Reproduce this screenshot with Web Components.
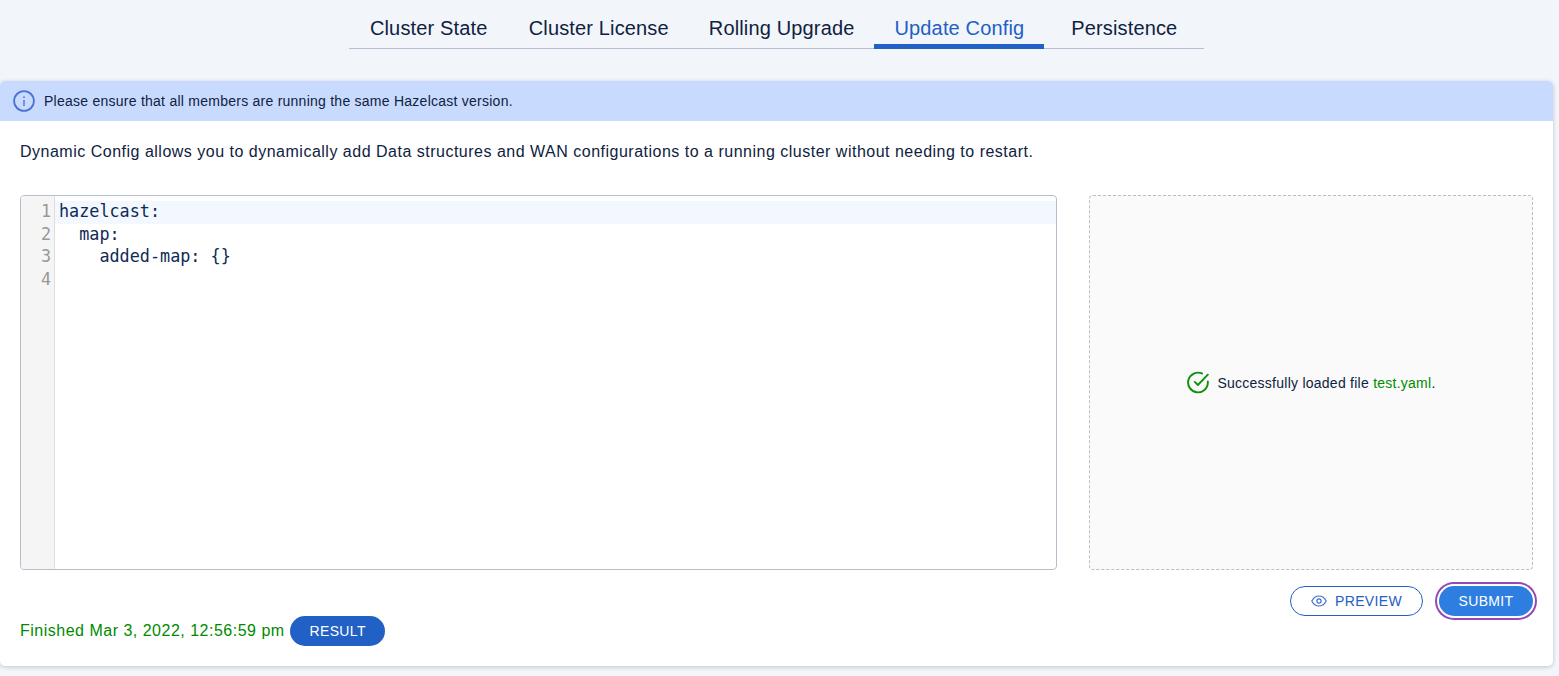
<!DOCTYPE html>
<html>
<head>
<meta charset="utf-8">
<title>Update Config</title>
<style>
  html, body { margin: 0; padding: 0; height: 676px; overflow: hidden; background: #f2f5fa; }
  body { font-family: "Liberation Sans", Arial, sans-serif; color: #0f2240; }
</style>
</head>
<body>
<config-page></config-page>
<script>
class TabBar extends HTMLElement {
  constructor() {
    super();
    this.attachShadow({ mode: 'open' });
    const active = this.getAttribute('active');
    const tabs = this.getAttribute('tabs').split('|');
    this.shadowRoot.innerHTML = `
      <style>
        :host { display: flex; justify-content: center; padding-top: 8px; padding-right: 6px; }
        .tabs { display: flex; border-bottom: 1px solid #b3bfd3; height: 40px; }
        .tab { font-size: 20px; letter-spacing: 0.15px; line-height: 40px; min-width: 160px; text-align: center; padding: 0 20px; color: #0f2240; box-sizing: border-box; height: 41px; }
        .tab.active { color: #2160c4; border-bottom: 5px solid #2160c4; }
      </style>
      <div class="tabs">
        ${tabs.map(t => `<div class="tab${t === active ? ' active' : ''}">${t}</div>`).join('')}
      </div>
    `;
  }
}

class InfoBanner extends HTMLElement {
  constructor() {
    super();
    this.attachShadow({ mode: 'open' });
    this.shadowRoot.innerHTML = `
      <style>
        :host { display: flex; align-items: center; gap: 9px; height: 40px; padding-left: 13px; background: #c9daff; border-radius: 5px 5px 0 0; font-size: 14px; letter-spacing: 0.25px; color: #0f2240; }
        svg { width: 22px; height: 22px; flex-shrink: 0; }
      </style>
      <svg viewBox="0 0 22 22" fill="none" stroke="#4a74cf" stroke-width="1.8" stroke-linecap="round">
        <circle cx="11" cy="11" r="9.9"></circle>
        <path d="M11 10.5v5" stroke-width="1.4"></path>
        <path d="M11 7v.2" stroke-width="1.7"></path>
      </svg>
      <slot></slot>
    `;
  }
}

class CodeEditor extends HTMLElement {
  constructor() {
    super();
    this.attachShadow({ mode: 'open' });
    const lines = ['hazelcast:', '  map:', '    added-map: {}', ''];
    this.shadowRoot.innerHTML = `
      <style>
        :host { display: flex; flex: 1; min-width: 0; height: 375px; box-sizing: border-box; border: 1px solid #b5bfcc; border-radius: 4px; overflow: hidden; background: #fff; font-family: "DejaVu Sans Mono", monospace; font-size: 16.8px; line-height: 22.4px; }
        .gutter { width: 33px; background: #f5f5f5; border-right: 1px solid #ddd; padding-top: 4.3px; color: #999; text-align: right; box-sizing: content-box; }
        .gutter div { padding-right: 3px; }
        .code { flex: 1; padding-top: 5.3px; color: #0f2a55; white-space: pre; }
        .line { padding-left: 4px; height: 22.4px; line-height: 20.4px; }
        .line.current { background: #f3f8fe; }
      </style>
      <div class="gutter">${lines.map((_, i) => `<div>${i + 1}</div>`).join('')}</div>
      <div class="code">${lines.map((l, i) => `<div class="line${i === 0 ? ' current' : ''}">${l}</div>`).join('')}</div>
    `;
  }
}

class DropZone extends HTMLElement {
  constructor() {
    super();
    this.attachShadow({ mode: 'open' });
    this.shadowRoot.innerHTML = `
      <style>
        :host { display: flex; align-items: center; justify-content: center; gap: 8px; width: 444px; height: 375px; box-sizing: border-box; border: 1px dashed #bcbcc4; border-radius: 4px; background: #fafafa; font-size: 14px; letter-spacing: 0.25px; color: #0f2240; }
        svg { width: 23px; height: 23px; flex-shrink: 0; }
        ::slotted(em) { font-style: normal; color: #008a00; }
      </style>
      <svg viewBox="0 0 24 24" fill="none" stroke="#0e920e" stroke-width="2" stroke-linecap="round" stroke-linejoin="round">
        <path d="M22.8 11v1a10.3 10.3 0 1 1-6.1-9.4"></path>
        <path d="M22.8 3.8 12.4 14.6l-3.2-3.2"></path>
      </svg>
      <span><slot></slot></span>
    `;
  }
}

class PillButton extends HTMLElement {
  constructor() {
    super();
    this.attachShadow({ mode: 'open' });
    this.shadowRoot.innerHTML = `
      <style>
        :host { display: inline-flex; align-items: center; justify-content: center; gap: 8px; height: 30px; box-sizing: border-box; border-radius: 15px; font-size: 14px; letter-spacing: 0.35px; background: #2160c4; color: #fff; width: 95px; }
        :host([variant="outline"]) { background: #fff; color: #2160c4; border: 1px solid #2160c4; width: 133px; }
        :host([variant="focus"]) { background: #2e7de1; width: 94px; box-shadow: 0 0 0 2px #fff, 0 0 0 4px #9549b8; }
        svg { width: 16px; height: 16px; }
      </style>
      <slot name="icon"></slot><slot></slot>
    `;
  }
}

class ConfigCard extends HTMLElement {
  constructor() {
    super();
    this.attachShadow({ mode: 'open' });
    this.shadowRoot.innerHTML = `
      <style>
        :host { display: block; width: 1553px; height: 585px; margin-top: 32px; box-sizing: border-box; background: #fff; border-radius: 5px; box-shadow: 0 1px 4px rgba(15, 34, 64, 0.22); }
        .intro { font-size: 16px; letter-spacing: 0.5px; line-height: 22px; padding: 20px 20px 0; color: #0f2240; }
        .work { display: flex; gap: 32px; padding: 32px 20px 0; }
        .foot { display: flex; justify-content: space-between; padding: 16px 20px 0; }
        .status { display: flex; align-items: center; gap: 5.5px; height: 30px; margin-top: 30px; font-size: 16px; letter-spacing: 0.5px; color: #008a00; }
        .actions { display: flex; gap: 16px; height: 30px; }
      </style>
      <info-banner>Please ensure that all members are running the same Hazelcast version.</info-banner>
      <div class="intro">Dynamic Config allows you to dynamically add Data structures and WAN configurations to a running cluster without needing to restart.</div>
      <div class="work">
        <code-editor></code-editor>
        <drop-zone>Successfully loaded file <em>test.yaml</em>.</drop-zone>
      </div>
      <div class="foot">
        <div class="status">Finished Mar 3, 2022, 12:56:59 pm <pill-button>RESULT</pill-button></div>
        <div class="actions">
          <pill-button variant="outline">
            <svg slot="icon" width="16" height="16" viewBox="0 0 16 16" fill="none" stroke="#3f6fd1" stroke-width="1.2"><path d="M.8 8S3.4 3 8 3s7.2 5 7.2 5-2.6 5-7.2 5S.8 8 .8 8z"></path><circle cx="8" cy="8" r="2.1"></circle></svg>
            PREVIEW
          </pill-button>
          <pill-button variant="focus">SUBMIT</pill-button>
        </div>
      </div>
    `;
  }
}

class ConfigPage extends HTMLElement {
  constructor() {
    super();
    this.attachShadow({ mode: 'open' });
    this.shadowRoot.innerHTML = `
      <style>:host { display: block; }</style>
      <tab-bar active="Update Config" tabs="Cluster State|Cluster License|Rolling Upgrade|Update Config|Persistence"></tab-bar>
      <config-card></config-card>
    `;
  }
}

customElements.define('tab-bar', TabBar);
customElements.define('info-banner', InfoBanner);
customElements.define('code-editor', CodeEditor);
customElements.define('drop-zone', DropZone);
customElements.define('pill-button', PillButton);
customElements.define('config-card', ConfigCard);
customElements.define('config-page', ConfigPage);
</script>
</body>
</html>
